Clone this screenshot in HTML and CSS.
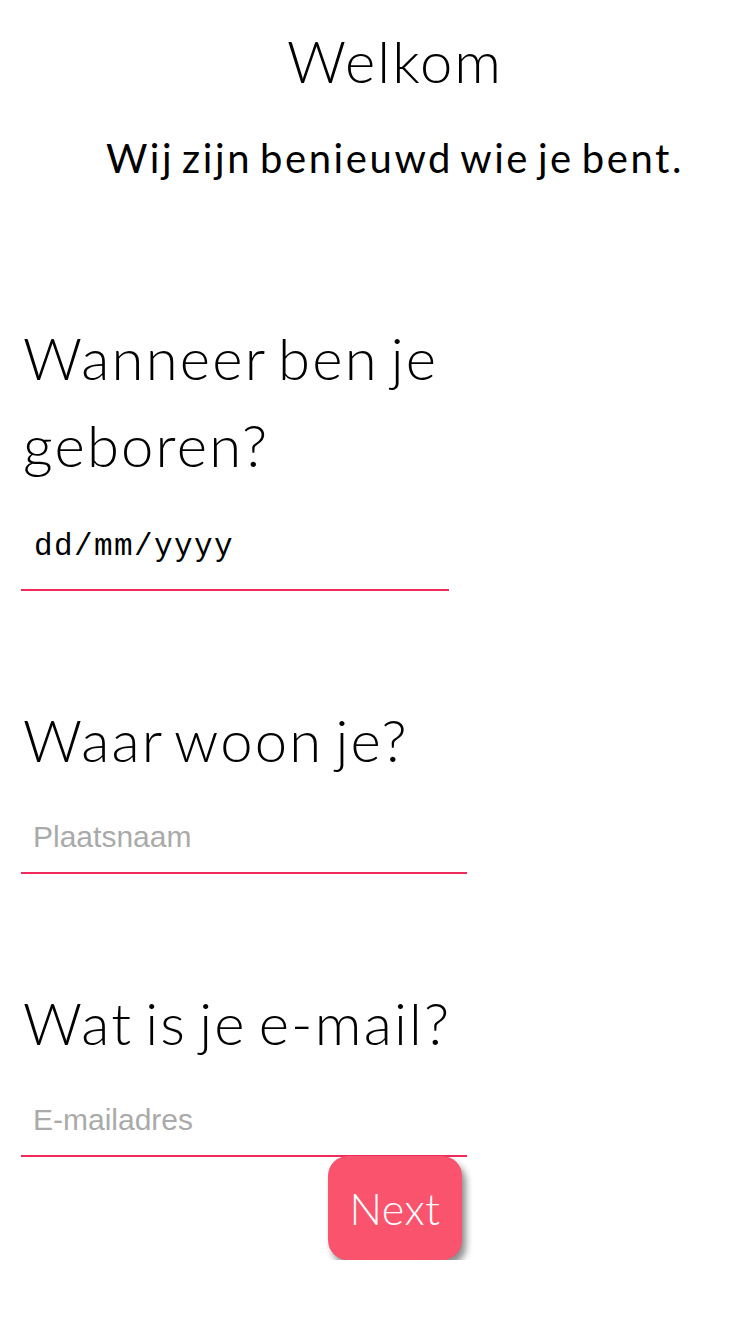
FILE: index.html
```html
<!DOCTYPE html>
<html lang="nl">
<head>
<meta charset="utf-8">
<title>Welkom</title>
<link rel="stylesheet" href="styles.css">
</head>
<body>
<main class="page">
  <header class="intro">
    <h1 class="title">Welkom</h1>
    <p class="subtitle">Wij zijn benieuwd wie je bent.</p>
  </header>
  <form class="form">
    <section class="question">
      <h2 class="question-label">Wanneer ben je<br>geboren?</h2>
      <div class="field field-date"><span class="date-text">dd/mm/yyyy</span></div>
    </section>
    <section class="question">
      <h2 class="question-label">Waar woon je?</h2>
      <div class="field"><input class="text-input" type="text" placeholder="Plaatsnaam"></div>
    </section>
    <section class="question">
      <h2 class="question-label">Wat is je e-mail?</h2>
      <div class="field"><input class="text-input" type="email" placeholder="E-mailadres"></div>
    </section>
    <div class="actions">
      <button class="next-btn" type="button">Next</button>
    </div>
  </form>
</main>
</body>
</html>
```
FILE: styles.css
```css
html, body {
  margin: 0;
  padding: 0;
  background: #ffffff;
}
body {
  font-family: Lato, "Noto Sans", sans-serif;
  color: #000;
}
.page {
  width: 750px;
}
.intro {
  display: flex;
  flex-direction: column;
  align-items: center;
  padding-top: 26px;
}
.title {
  margin: 0;
  font-size: 58px;
  font-weight: 300;
  line-height: 70px;
  letter-spacing: 2px;
  padding-left: 40px;
}
.subtitle {
  margin: 38px 0 0 0;
  font-size: 40px;
  font-weight: 400;
  line-height: 48px;
  letter-spacing: 2.6px;
  word-spacing: -5px;
  padding-left: 40px;
}
.form {
  padding-left: 21px;
  margin-top: 132px;
}
.question + .question {
  margin-top: 105px;
}
.question-label {
  margin: 0;
  padding-left: 2px;
  font-size: 58px;
  font-weight: 300;
  line-height: 87px;
  letter-spacing: 2.2px;
  word-spacing: -6px;
}
.field {
  border-bottom: 2px solid #ef2b5b;
  width: 446px;
  padding: 37px 0 18px 0;
}
.field-date {
  width: 428px;
  padding: 41px 0 24px 0;
}
.date-text {
  display: block;
  padding-left: 13px;
  font-family: "Liberation Mono", monospace;
  font-size: 31px;
  line-height: 36px;
  letter-spacing: 1.4px;
  color: #000;
}
.text-input {
  display: block;
  box-sizing: border-box;
  width: 100%;
  border: 0;
  outline: 0;
  padding: 0 0 0 12px;
  margin: 0;
  background: transparent;
  font-family: "Liberation Sans", Arial, sans-serif;
  font-size: 30px;
  line-height: 34px;
  height: 34px;
  color: #000;
}
.text-input::placeholder {
  color: #aaaaaa;
}
.actions {
  display: flex;
  padding-left: 307px;
  margin-top: -1px;
}
.next-btn {
  width: 134px;
  height: 104px;
  border: 0;
  border-radius: 20px;
  background: #f9536e;
  color: #fff;
  font-family: Lato, "Noto Sans", sans-serif;
  font-size: 43px;
  font-weight: 300;
  letter-spacing: 0.5px;
  box-shadow: 4px 6px 7px rgba(0, 0, 0, 0.45);
  padding: 0;
}
```
